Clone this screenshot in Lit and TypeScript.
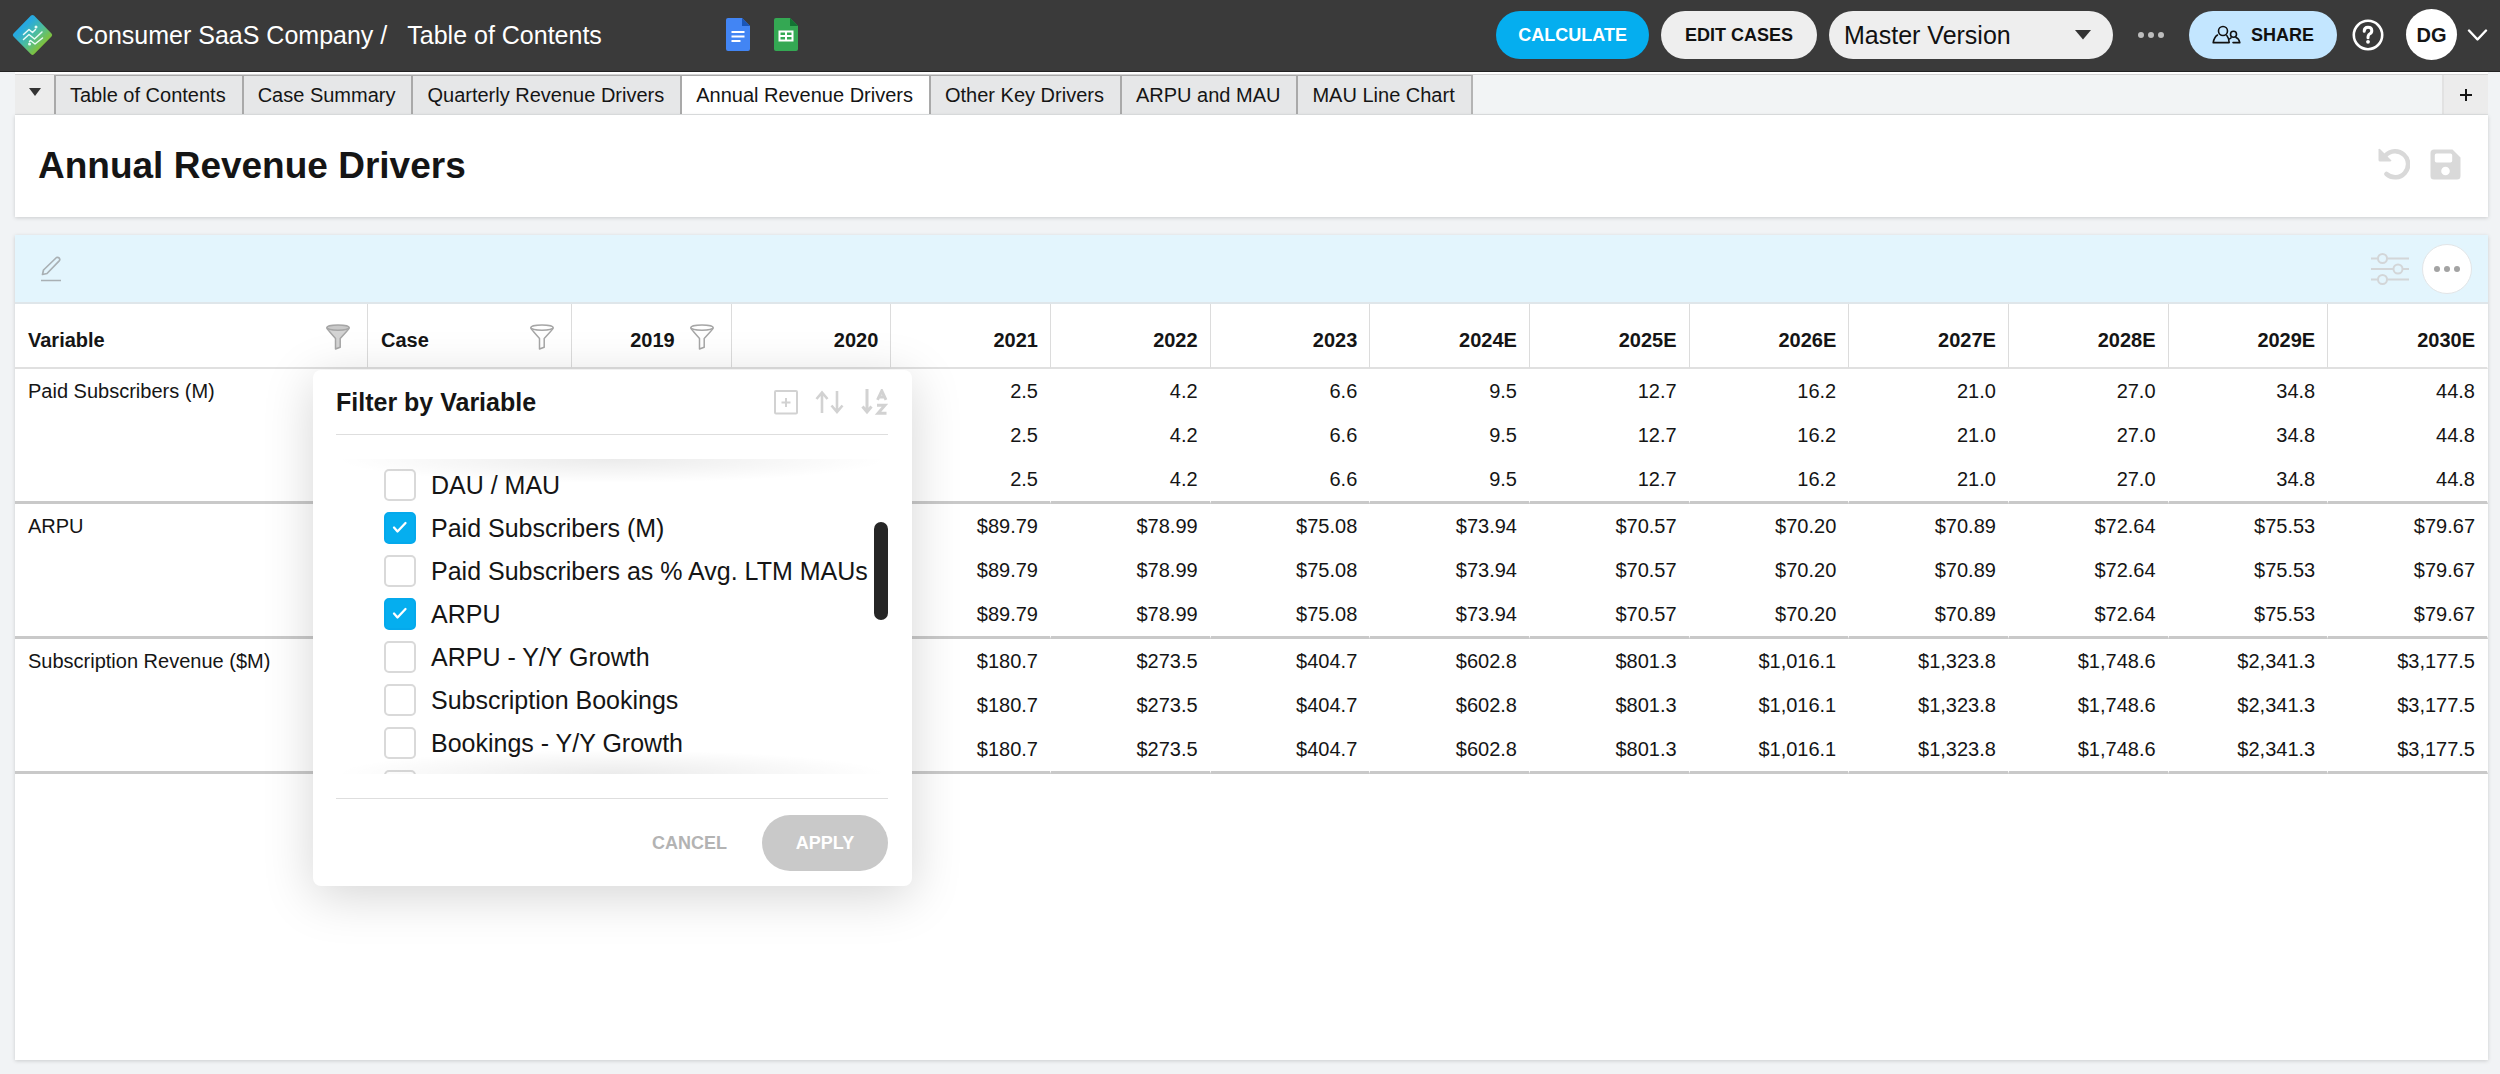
import { LitElement, html, css, svg, nothing } from "lit";
import { customElement, state } from "lit/decorators.js";
import { classMap } from "lit/directives/class-map.js";

const TABS = [
  "Table of Contents",
  "Case Summary",
  "Quarterly Revenue Drivers",
  "Annual Revenue Drivers",
  "Other Key Drivers",
  "ARPU and MAU",
  "MAU Line Chart",
];

const YEARS = [
  "2019", "2020", "2021", "2022", "2023", "2024E", "2025E",
  "2026E", "2027E", "2028E", "2029E", "2030E",
];

interface Group {
  name: string;
  values: string[];
}

/* Values start at 2021 */
const GROUPS: Group[] = [
  {
    name: "Paid Subscribers (M)",
    values: ["2.5", "4.2", "6.6", "9.5", "12.7", "16.2", "21.0", "27.0", "34.8", "44.8"],
  },
  {
    name: "ARPU",
    values: ["$89.79", "$78.99", "$75.08", "$73.94", "$70.57", "$70.20", "$70.89", "$72.64", "$75.53", "$79.67"],
  },
  {
    name: "Subscription Revenue ($M)",
    values: ["$180.7", "$273.5", "$404.7", "$602.8", "$801.3", "$1,016.1", "$1,323.8", "$1,748.6", "$2,341.3", "$3,177.5"],
  },
];

const OPTIONS = [
  "DAU / MAU",
  "Paid Subscribers (M)",
  "Paid Subscribers as % Avg. LTM MAUs",
  "ARPU",
  "ARPU - Y/Y Growth",
  "Subscription Bookings",
  "Bookings - Y/Y Growth",
];

const dots = (r: number, gap: number) => html`
  <svg width="28" height="10" viewBox="-14 -5 28 10" fill="currentColor" aria-hidden="true">
    ${[-gap, 0, gap].map((x) => svg`<circle cx=${x} cy="0" r=${r}></circle>`)}
  </svg>`;

const funnel = (filled: boolean) => html`
  <svg width="24" height="26" viewBox="0 0 24 26" fill="none" stroke="#a6a6a6" stroke-width="1.5" stroke-linejoin="round" aria-hidden="true">
    <path d="M.8 3.600C.8 5 2 6 3.200 7.200L9.500 14.400V25L14.200 23.300V14.400L20.800 7.200C22 6 23.200 5 23.200 3.600" fill=${filled ? "#d4d4d4" : "none"}></path>
    <ellipse cx="12" cy="3.600" rx="11.200" ry="2.700" fill=${filled ? "#c9c9c9" : "#fff"}></ellipse>
  </svg>`;

@customElement("app-root")
export class AppRoot extends LitElement {
  @state() private activeTab = 3;
  @state() private checked = new Set(["Paid Subscribers (M)", "ARPU"]);

  static styles = css`
    :host {
      display: flex;
      flex-direction: column;
      min-height: 100vh;
      box-sizing: border-box;
      padding-bottom: 14px;
      background: #f1f3f5;
      color: #151515;
      font-family: "Liberation Sans", Arial, Helvetica, sans-serif;
      font-size: 20px;
      line-height: 24px;
    }
    * { box-sizing: border-box; }
    button, select, input { font: inherit; color: inherit; margin: 0; padding: 0; border: 0; }
    button { background: none; cursor: pointer; display: inline-flex; align-items: center; justify-content: center; }
    a { color: inherit; text-decoration: none; }
    svg { display: block; flex: none; }

    .topbar {
      display: flex;
      align-items: center;
      height: 72px;
      padding: 0 12px 2px 12px;
      background: #3a3a3a;
      border-bottom: 1px solid #222;
      color: #fff;
    }
    .crumbs { display: flex; gap: 20px; margin-left: 23px; font-size: 25px; line-height: 32px; white-space: nowrap; }
    .docs { display: flex; gap: 24px; margin-left: 124px; }
    .actions { display: flex; align-items: center; gap: 12px; margin-left: auto; }
    .pill { height: 48px; border-radius: 24px; font-size: 18px; font-weight: bold; white-space: nowrap; }
    .calculate { padding: 0 22px; background: #05aeef; color: #fff; }
    .edit { padding: 0 24px; background: #eee; color: #111; }
    .share { background: #c3e6ff; color: #111; padding: 0 23px; gap: 10px; }
    .version { display: grid; align-items: center; width: 284px; color: #111; }
    .version select {
      grid-area: 1 / 1;
      appearance: none;
      width: 100%;
      height: 48px;
      padding: 0 48px 0 15px;
      border-radius: 24px;
      background: #eee;
      font-size: 25px;
    }
    .version svg { grid-area: 1 / 1; justify-self: end; margin-right: 22px; pointer-events: none; }
    .more { margin: 0 12px; color: #bdbdbd; }
    .account { display: flex; align-items: center; gap: 10px; margin-left: 10px; }
    .help { margin-left: 3px; }
    .avatar { width: 51px; height: 51px; border-radius: 50%; background: #fff; color: #151515; font-weight: bold; }

    .strip {
      display: flex;
      height: 43px;
      margin: 0 12px 0 15px;
      padding-top: 3px;
      background: #f2f4f5;
      border-bottom: 1px solid #dfe1e2;
      box-shadow: inset 0 2px #fff, inset 0 3px #d4d4d4;
    }
    .strip button { white-space: nowrap; }
    .tabmenu, .addtab { background: #ececec; }
    .tabmenu { width: 39px; padding-bottom: 6px; }
    .addtab { width: 46px; margin-left: auto; border-left: 2px solid #e2e2e2; }
    .tab { padding: 0 16px 0 14px; background: #e6e7e8; border-left: 2px solid #a9a9a9; border-top: 1px solid #a9a9a9; }
    .tab.last { border-right: 2px solid #b4b4b4; }
    .tab.active { background: #fff; }

    .titlecard, .panel { margin: 0 12px 0 15px; background: #fff; box-shadow: 0 1px 4px rgba(0, 0, 0, 0.16); }
    .titlecard { display: flex; align-items: center; justify-content: space-between; height: 102px; padding: 0 27px 0 23px; }
    h1 { margin: 0; font-size: 37px; line-height: 48px; }
    .titleactions { display: flex; gap: 20px; margin-bottom: 4px; color: #d9d9d9; }

    .panel { position: relative; flex: 1; margin-top: 18px; }
    .toolbar {
      display: flex;
      align-items: center;
      justify-content: space-between;
      height: 69px;
      padding: 0 16px 0 26px;
      background: #e3f5fd;
      border-bottom: 2px solid #dfe6ea;
    }
    .tools { display: flex; align-items: center; gap: 13px; }
    .round { width: 50px; height: 50px; border-radius: 50%; background: #fff; border: 1px solid #e2e5e7; color: #a3a3a3; }

    table { width: 100%; table-layout: fixed; border-collapse: separate; border-spacing: 0; }
    .colvar { width: 353px; }
    .colcase { width: 204px; }
    th, td { padding: 0 12px 0 13px; text-align: right; white-space: nowrap; }
    th { height: 65px; border-right: 1px solid #dcdcdc; border-bottom: 2px solid #e0e0e0; }
    th:last-child { border-right-color: transparent; }
    .head { display: flex; align-items: center; justify-content: flex-end; gap: 15px; padding-top: 8px; }
    .head.wide { justify-content: space-between; }
    .head button { margin: 0 5px 6px 0; }
    td { height: 44px; border-right: 1px solid #fff; }
    .end td, td.name { height: 47px; border-bottom: 3px solid #c9c9c9; }
    td.name, th.left { text-align: left; }
    td.name { vertical-align: top; padding-top: 10px; }

    .popup {
      position: absolute;
      top: 135px;
      left: 298px;
      width: 599px;
      padding: 0 24px 15px 23px;
      border-radius: 8px;
      background: #fff;
      box-shadow: 0 10px 50px rgba(0, 0, 0, 0.17);
    }
    .popuphead { display: flex; align-items: center; justify-content: space-between; height: 65px; border-bottom: 1px solid #dedede; }
    h2 { margin: 0; font-size: 25px; line-height: 32px; }
    .sorts { display: flex; gap: 17px; color: #d2d2d2; }
    .listwrap { position: relative; margin: 24px 0; }
    .list { height: 315px; margin: 0; padding: 4px 0 0 48px; overflow: hidden; list-style: none; }
    .list li { display: flex; height: 43px; }
    .list label { display: flex; align-items: center; gap: 15px; font-size: 25px; line-height: 32px; white-space: nowrap; cursor: pointer; }
    .box { display: grid; }
    .box input { grid-area: 1 / 1; appearance: none; width: 32px; height: 32px; border: 2px solid #d9d9d9; border-radius: 5px; background: #fff; }
    .box input:checked { border-color: #05a9ec; background: #05aeef; }
    .box svg { grid-area: 1 / 1; place-self: center; pointer-events: none; }
    .fade { position: absolute; left: 0; right: 0; height: 24px; pointer-events: none; }
    .fade.top { top: 0; background: radial-gradient(ellipse 50% 100% at 50% 0, rgba(0, 0, 0, 0.08), transparent); }
    .fade.bottom { bottom: 0; background: radial-gradient(ellipse 50% 100% at 50% 100%, rgba(0, 0, 0, 0.08), transparent); }
    .thumb { position: absolute; top: 63px; right: 0; width: 14px; height: 98px; border-radius: 7px; background: #262626; }
    .popupfoot { display: flex; justify-content: flex-end; gap: 35px; padding-top: 16px; border-top: 1px solid #dedede; font-size: 18px; font-weight: bold; }
    .cancel { color: #b3b3b3; }
    .apply { width: 126px; height: 56px; border-radius: 28px; background: #c9c9c9; color: #fff; }
  `;

  private toggle(name: string) {
    const next = new Set(this.checked);
    next.has(name) ? next.delete(name) : next.add(name);
    this.checked = next;
  }

  private renderTopbar() {
    return html`
      <header class="topbar">
        <a href="#" aria-label="Home">
          <svg width="41" height="42" viewBox="0 0 41 42" aria-hidden="true">
            <defs>
              <linearGradient id="brand" x1="0.2" y1="0.200" x2="0.800" y2="0.800">
                <stop offset="0.150" stop-color="#27a9e0"></stop>
                <stop offset="0.550" stop-color="#4dbd9c"></stop>
                <stop offset="0.900" stop-color="#7cc142"></stop>
              </linearGradient>
            </defs>
            <path d="M19 1.600Q20.500.300 22 1.600L39.500 19.500Q41 21 39.500 22.500L22 40.300Q20.500 41.600 19 40.300L1.500 22.500Q0 21 1.500 19.500Z" fill="url(#brand)"></path>
            <g fill="none" stroke="#e9fbf7" stroke-width="1.500" stroke-linejoin="round" stroke-linecap="round">
              <path d="M11.500 20.500L17 15.500L20.500 18.500L23.500 15.500M11.500 25.500L17 20.500L22.500 25L30 18M17.500 27.500L18.500 26.500L23 30L30.500 24"></path>
            </g>
            <circle cx="24" cy="13" r="1.500" fill="#e9fbf7"></circle>
            <circle cx="17.500" cy="30" r="1.500" fill="#e9fbf7"></circle>
          </svg>
        </a>
        <nav class="crumbs" aria-label="Breadcrumb">
          <a href="#">Consumer SaaS Company /</a>
          <a href="#">Table of Contents</a>
        </nav>
        <div class="docs">
          <a href="#" aria-label="Google Docs">
            <svg width="24" height="33" viewBox="0 0 24 33" aria-hidden="true">
              <path d="M2 0H16L24 8V31Q24 33 22 33H2Q0 33 0 31V2Q0 0 2 0Z" fill="#4285f4"></path>
              <path d="M16 0L24 8H16Z" fill="#1a56b8"></path>
              <path d="M5.500 14H18.500M5.500 18.500H18.500M5.500 23H14.500" stroke="#fff" stroke-width="2"></path>
            </svg>
          </a>
          <a href="#" aria-label="Google Sheets">
            <svg width="24" height="33" viewBox="0 0 24 33" aria-hidden="true">
              <path d="M2 0H16L24 8V31Q24 33 22 33H2Q0 33 0 31V2Q0 0 2 0Z" fill="#34a853"></path>
              <path d="M16 0L24 8H16Z" fill="#137333"></path>
              <path d="M5.500 13.500H18.500V22.500H5.500ZM5.500 18H18.500M12 13.500V22.500" fill="none" stroke="#fff" stroke-width="2"></path>
            </svg>
          </a>
        </div>
        <div class="actions">
          <button class="pill calculate" type="button">CALCULATE</button>
          <button class="pill edit" type="button">EDIT CASES</button>
          <div class="version">
            <select aria-label="Version"><option>Master Version</option></select>
            <svg width="16" height="10" viewBox="0 0 16 10" aria-hidden="true"><path d="M0 0H16L8 9.500Z" fill="#333"></path></svg>
          </div>
          <button class="more" type="button" aria-label="More">${dots(3, 10)}</button>
          <button class="pill share" type="button">
            <svg width="29" height="20" viewBox="0 0 29 20" fill="none" stroke="#111" stroke-width="1.600" stroke-linecap="round" stroke-linejoin="round" aria-hidden="true">
              <circle cx="11" cy="6" r="4.500"></circle>
              <path d="M5.500 10Q2.200 12 1.200 17.600H17.200Q16.800 12.800 14.800 10.500"></path>
              <circle cx="21.500" cy="9.300" r="3"></circle>
              <path d="M19 12.800L17.500 14M24 12.500Q27 13.500 27.800 17.600H21"></path>
            </svg>
            SHARE
          </button>
          <button class="help" type="button" aria-label="Help">
            <svg width="32" height="32" viewBox="0 0 32 32" fill="none" stroke="#fff" aria-hidden="true">
              <circle cx="16" cy="16" r="14.200" stroke-width="2.600"></circle>
              <path d="M12.200 12.300Q12.200 8.300 16 8.300Q19.800 8.300 19.800 11.800Q19.800 14 17.600 15Q16 15.800 16 18.800" stroke-width="3" stroke-linecap="round"></path>
              <circle cx="16" cy="22.800" r="1.900" fill="#fff" stroke="none"></circle>
            </svg>
          </button>
          <div class="account">
            <button class="avatar" type="button">DG</button>
            <button type="button" aria-label="Account menu">
              <svg width="21" height="12" viewBox="0 0 21 12" fill="none" stroke="#fff" stroke-width="2.400" stroke-linecap="round" stroke-linejoin="round" aria-hidden="true"><path d="M2 1.500L10.500 10.500L19 1.500"></path></svg>
            </button>
          </div>
        </div>
      </header>`;
  }

  private renderTabs() {
    return html`
      <nav class="strip" aria-label="Sheets">
        <button class="tabmenu" type="button" aria-label="All sheets">
          <svg width="12" height="8" viewBox="0 0 12 8" aria-hidden="true"><path d="M0 0H12L6 8Z" fill="#333"></path></svg>
        </button>
        ${TABS.map((name, i) => html`
          <button
            type="button"
            class=${classMap({ tab: true, active: i === this.activeTab, last: i === TABS.length - 1 })}
            @click=${() => (this.activeTab = i)}
          >${name}</button>`)}
        <button class="addtab" type="button" aria-label="Add sheet">
          <svg width="12" height="12" viewBox="0 0 12 12" stroke="#151515" stroke-width="2" aria-hidden="true"><path d="M6 0V12M0 6H12"></path></svg>
        </button>
      </nav>`;
  }

  private renderTitle() {
    return html`
      <section class="titlecard">
        <h1>${TABS[this.activeTab]}</h1>
        <div class="titleactions">
          <button type="button" aria-label="Undo">
            <svg width="32" height="32" viewBox="0 0 32 32" aria-hidden="true">
              <path d="M7.500 7.500A13 13 0 1 1 8.500 26" fill="none" stroke="currentColor" stroke-width="4.600" stroke-linecap="round"></path>
              <path d="M.500 1.500Q.800.200 2 1L13.500 12.500Q13 13.500 12 13.500H2Q.500 13.500.500 12Z" fill="currentColor"></path>
            </svg>
          </button>
          <button type="button" aria-label="Save">
            <svg width="31" height="31" viewBox="0 0 31 31" aria-hidden="true">
              <path fill="currentColor" fill-rule="evenodd" d="M4 .500H22.500L30.500 8.500V27Q30.500 30.500 27 30.500H4Q.500 30.500.500 27V4Q.500.500 4 .500ZM6.500 4.500Q4.800 4.500 4.800 6.200V11.800Q4.800 13.500 6.500 13.500H20.500Q22.200 13.500 22.200 11.800V6.200Q22.200 4.500 20.500 4.500ZM15.500 17.700A4.300 4.300 0 1 0 15.500 26.300A4.300 4.300 0 1 0 15.500 17.700Z"></path>
            </svg>
          </button>
        </div>
      </section>`;
  }

  private renderTable() {
    return html`
      <table>
        <colgroup>
          <col class="colvar"><col class="colcase">${YEARS.map(() => html`<col>`)}
        </colgroup>
        <thead>
          <tr>
            <th class="left"><div class="head wide">Variable<button type="button" aria-label="Filter Variable">${funnel(true)}</button></div></th>
            <th class="left"><div class="head wide">Case<button type="button" aria-label="Filter Case">${funnel(false)}</button></div></th>
            ${YEARS.map((year, i) => html`
              <th><div class="head">${year}${i === 0
                ? html`<button type="button" aria-label="Filter 2019">${funnel(false)}</button>`
                : nothing}</div></th>`)}
          </tr>
        </thead>
        ${GROUPS.map((group) => html`
          <tbody>
            ${[0, 1, 2].map((row) => html`
              <tr class=${row === 2 ? "end" : ""}>
                ${row === 0 ? html`<td class="name" rowspan="3">${group.name}</td>` : nothing}
                <td></td><td></td><td></td>
                ${group.values.map((value) => html`<td>${value}</td>`)}
              </tr>`)}
          </tbody>`)}
      </table>`;
  }

  private renderOption(name: string) {
    const on = this.checked.has(name);
    return html`
      <li><label>
        <span class="box">
          <input type="checkbox" .checked=${on} @change=${() => this.toggle(name)}>
          ${on
            ? html`<svg width="16" height="14" viewBox="0 0 16 14" fill="none" stroke="#fff" stroke-width="2.300" stroke-linecap="round" stroke-linejoin="round" aria-hidden="true"><path d="M2 6.500L5.500 10.500L13.500 2"></path></svg>`
            : nothing}
        </span>
        ${name}
      </label></li>`;
  }

  private renderPopup() {
    return html`
      <section class="popup" role="dialog" aria-labelledby="filter-title">
        <div class="popuphead">
          <h2 id="filter-title">Filter by Variable</h2>
          <div class="sorts">
            <button type="button" aria-label="Expand all">
              <svg width="24" height="25" viewBox="0 0 24 25" fill="none" stroke="currentColor" stroke-width="2" aria-hidden="true"><rect x="1" y="1" width="22" height="22.500" rx="1"></rect><path d="M12 8V17M7.500 12.500H16.500"></path></svg>
            </button>
            <button type="button" aria-label="Reorder">
              <svg width="29" height="25" viewBox="0 0 29 25" fill="none" stroke="currentColor" stroke-width="2.600" aria-hidden="true"><path d="M7 23V2M1.500 9L7 2.500L12.500 9M22 1V22M16.500 15.500L22 22L27.500 15.500"></path></svg>
            </button>
            <button type="button" aria-label="Sort A to Z">
              <svg width="27" height="26" viewBox="0 0 27 26" fill="none" stroke="currentColor" stroke-width="3" aria-hidden="true"><path d="M6 0V23M1.500 17.500L6 23L10.500 17.500"></path><path d="M16.500 10.800L20.800 1.800L25 10.800M18 8H23.500M16 16.300H24L17 24.200H25.500" stroke-width="2.900"></path></svg>
            </button>
          </div>
        </div>
        <div class="listwrap">
          <ul class="list">
            ${OPTIONS.map((name) => this.renderOption(name))}
            <li><label><span class="box"><input type="checkbox" aria-label="Subscription Revenue ($M)"></span></label></li>
          </ul>
          <div class="fade top"></div>
          <div class="fade bottom"></div>
          <div class="thumb"></div>
        </div>
        <div class="popupfoot">
          <button class="cancel" type="button">CANCEL</button>
          <button class="apply" type="button">APPLY</button>
        </div>
      </section>`;
  }

  render() {
    return html`
      ${this.renderTopbar()}
      ${this.renderTabs()}
      ${this.renderTitle()}
      <main class="panel">
        <div class="toolbar">
          <button type="button" aria-label="Edit">
            <svg width="20" height="26" viewBox="0 0 20 26" fill="none" stroke="#a9b0b4" stroke-width="1.700" stroke-linejoin="round" aria-hidden="true"><path d="M1.500 18.500L2.500 14L15.500 1.500Q17 .800 18.300 2.200Q19.300 3.500 18.200 4.800L6 17.500ZM0 24.500H20"></path></svg>
          </button>
          <div class="tools">
            <button type="button" aria-label="Settings">
              <svg width="38" height="32" viewBox="0 0 38 32" fill="#e3f5fd" stroke="#d3d6d8" stroke-width="2" aria-hidden="true"><path d="M0 5.500H38M0 16H38M0 26.500H38"></path><circle cx="11.500" cy="5.500" r="4.500"></circle><circle cx="27" cy="16" r="4.500"></circle><circle cx="11.500" cy="26.500" r="4.500"></circle></svg>
            </button>
            <button class="round" type="button" aria-label="Table options">${dots(3, 10)}</button>
          </div>
        </div>
        ${this.renderTable()}
        ${this.renderPopup()}
      </main>`;
  }
}
